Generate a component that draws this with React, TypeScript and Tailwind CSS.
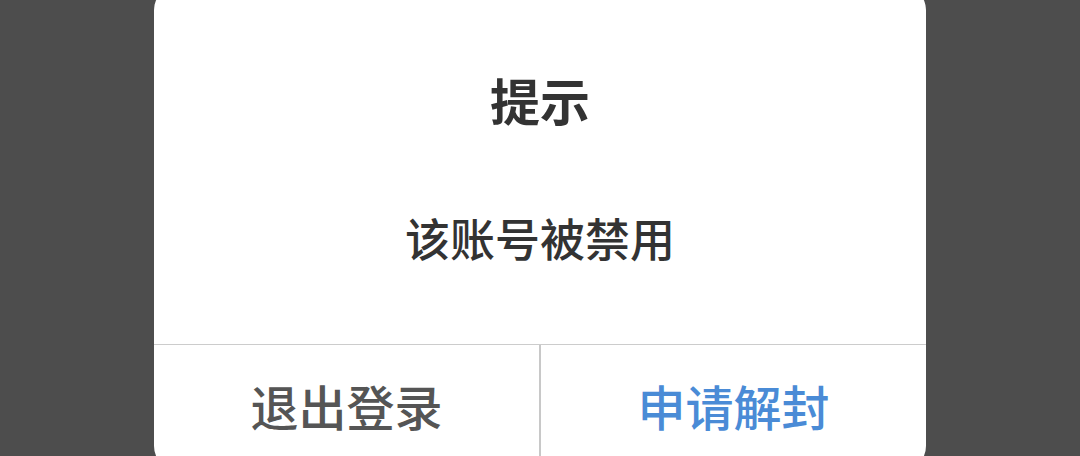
import React from 'react';

const cjk = { fontFamily: '"Noto Sans CJK SC", "Noto Sans", sans-serif' };

export default function App() {
  return (
    <div className="w-[1080px] h-[456px] overflow-hidden bg-[#4d4d4d] flex justify-center" style={cjk}>
      <div className="w-[772px] h-[484px] -mt-[14px] shrink-0 rounded-[24px] bg-white flex flex-col">
        {/* Title + message */}
        <div className="flex-1 flex flex-col items-center">
          <h2 className="mt-[88px] text-[50px] leading-[50px] font-bold text-[#333333]">提示</h2>
          <p className="mt-[91px] text-[45px] leading-[45px] font-medium text-[#333333]">该账号被禁用</p>
        </div>

        {/* Actions */}
        <div className="h-[126px] flex border-t border-[#cccccc]">
          <button className="flex-1 flex items-center justify-center pb-[5px] text-[48px] leading-[48px] font-medium text-[#555555]">
            退出登录
          </button>
          <div className="w-[2px] bg-[#c8c8c8]" />
          <button className="flex-1 flex items-center justify-center pb-[5px] text-[48px] leading-[48px] font-medium text-[#4a8bd6]">
            申请解封
          </button>
        </div>
      </div>
    </div>
  );
}
